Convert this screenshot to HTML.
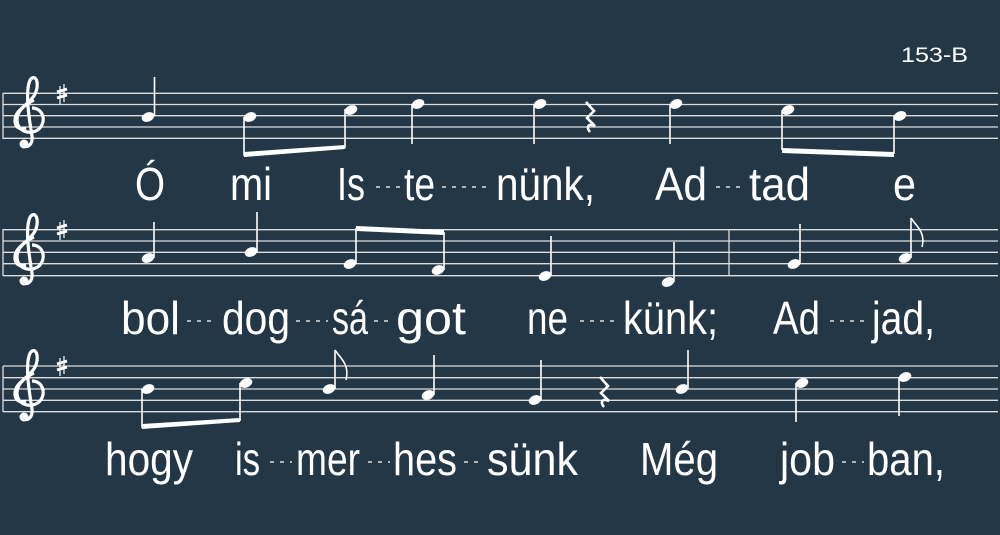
<!DOCTYPE html>
<html><head><meta charset="utf-8"><style>
html,body{margin:0;padding:0;background:#243746;}
svg{display:block}
text{font-family:"Liberation Sans Narrow","Liberation Sans",sans-serif;fill:#fff}
</style></head><body>
<svg width="1000" height="535" viewBox="0 0 1000 535" xmlns="http://www.w3.org/2000/svg">
<defs>
<g id="clef" fill="#fff">
<path d="M14 38 C2 42 0 28 7 21 C14 13 27 7 25 -8 C24 -14 19 -14 17 -7 C14 4 16 22 20 46 C21 54 16 58 12 56" fill="none" stroke="#fff" stroke-width="3.2"/>
<path d="M20 18 C31 18 35 31 27 39 C18 46 5 41 5 30 C5 20 14 14 22 10" fill="none" stroke="#fff" stroke-width="3.2"/>
<circle cx="12" cy="54" r="4.5"/>
</g>
<g id="sharp" stroke="#fff" fill="none"><path d="M-2 -8 V10 M2 -10 V8" stroke-width="1.2"/><path d="M-5 -2 L5 -5 M-5 4 L5 1" stroke-width="3"/></g>
<ellipse id="h" rx="6.5" ry="4.6" transform="rotate(-22)" fill="#fff"/>
<path id="rest" d="M-4 -13 L4 -4 L-3 3 L5 11 C-2 8 -4 12 0 17" fill="none" stroke="#fff" stroke-width="2.6"/>
</defs>
<text x="901" y="62" style="font-family:'Liberation Sans',sans-serif" font-size="21" textLength="67" lengthAdjust="spacingAndGlyphs">153-B</text>

<g stroke="#ddd" stroke-width="1.3">
<path d="M3 93.3H998M3 104.5H998M3 115.7H998M3 127H998M3 138.3H998M3 93V139"/>
<path d="M3 229.7H998M3 241H998M3 252.3H998M3 263.7H998M3 275.7H998M3 229V276M729 230V276"/>
<path d="M3 366H998M3 377.7H998M3 389H998M3 400.3H998M3 411.7H998M3 366V412"/>
</g>
<use href="#clef" x="12" y="90"/><use href="#sharp" x="62" y="94"/>
<use href="#clef" x="12" y="227"/><use href="#sharp" x="62" y="230"/>
<use href="#clef" x="12" y="363"/><use href="#sharp" x="62" y="366"/>

<g stroke="#fff" stroke-width="1.6">
<path d="M154.5 116V77"/><path d="M244 117V156M345 109V148M412 104V144M534 104V144M670 104V144M782 110V150M894 116V154"/>
</g>
<g fill="#fff">
<use href="#h" x="148" y="117"/><use href="#h" x="250" y="117"/><use href="#h" x="351" y="110"/><use href="#h" x="418" y="104"/>
<use href="#h" x="540" y="104"/><use href="#h" x="676" y="104"/><use href="#h" x="788" y="110"/><use href="#h" x="900" y="116"/>
<path d="M244 152L345 145V149L244 157Z"/><path d="M782 148L894 152V157L782 153Z"/>
</g>
<use href="#rest" x="590" y="115"/>

<g stroke="#fff" stroke-width="1.6">
<path d="M154 258V222M257 252V212M356 264V228M444 270V232M551 276V236M674 282V242M800 264V224M911 258V218"/>
<path d="M911 218C916 226 926 232 922 247" fill="none"/>
</g>
<g fill="#fff">
<use href="#h" x="148" y="258"/><use href="#h" x="251" y="252"/><use href="#h" x="350" y="264"/><use href="#h" x="438" y="270"/>
<use href="#h" x="545" y="276"/><use href="#h" x="668" y="282"/><use href="#h" x="794" y="264"/><use href="#h" x="905" y="258"/>
<path d="M356 226L444 230V235L356 231Z"/>
</g>

<g stroke="#fff" stroke-width="1.6">
<path d="M142 389V428M240 383V421M335 389V350M434 395V355M541 400V360M688 389V350M796 383V422M899 377V416"/>
<path d="M335 350C340 358 350 364 346 380" fill="none"/>
</g>
<g fill="#fff">
<use href="#h" x="148" y="389"/><use href="#h" x="246" y="383"/><use href="#h" x="329" y="389"/><use href="#h" x="428" y="395"/>
<use href="#h" x="535" y="400"/><use href="#h" x="682" y="389"/><use href="#h" x="802" y="383"/><use href="#h" x="905" y="377"/>
<path d="M142 424L240 418V422L142 429Z"/>
</g>
<use href="#rest" x="604" y="390"/>

<g font-size="46">
<text x="135" y="200" textLength="30" lengthAdjust="spacingAndGlyphs">Ó</text>
<text x="230" y="200" textLength="42" lengthAdjust="spacingAndGlyphs">mi</text>
<text x="337" y="200" textLength="28" lengthAdjust="spacingAndGlyphs">Is</text>
<text x="404" y="200" textLength="31" lengthAdjust="spacingAndGlyphs">te</text>
<text x="496" y="200" textLength="99" lengthAdjust="spacingAndGlyphs">nünk,</text>
<text x="655" y="200" textLength="52" lengthAdjust="spacingAndGlyphs">Ad</text>
<text x="749" y="200" textLength="61" lengthAdjust="spacingAndGlyphs">tad</text>
<text x="893" y="200" textLength="23" lengthAdjust="spacingAndGlyphs">e</text>
<text x="121" y="334" textLength="59" lengthAdjust="spacingAndGlyphs">bol</text>
<text x="222" y="334" textLength="68" lengthAdjust="spacingAndGlyphs">dog</text>
<text x="332" y="334" textLength="36" lengthAdjust="spacingAndGlyphs">sá</text>
<text x="396" y="334" textLength="70" lengthAdjust="spacingAndGlyphs">got</text>
<text x="527" y="334" textLength="41" lengthAdjust="spacingAndGlyphs">ne</text>
<text x="623" y="334" textLength="95" lengthAdjust="spacingAndGlyphs">künk;</text>
<text x="773" y="334" textLength="47" lengthAdjust="spacingAndGlyphs">Ad</text>
<text x="872" y="334" textLength="63" lengthAdjust="spacingAndGlyphs">jad,</text>
<text x="105" y="475" textLength="88" lengthAdjust="spacingAndGlyphs">hogy</text>
<text x="235" y="475" textLength="25" lengthAdjust="spacingAndGlyphs">is</text>
<text x="296" y="475" textLength="64" lengthAdjust="spacingAndGlyphs">mer</text>
<text x="393" y="475" textLength="64" lengthAdjust="spacingAndGlyphs">hes</text>
<text x="487" y="475" textLength="91" lengthAdjust="spacingAndGlyphs">sünk</text>
<text x="640" y="475" textLength="78" lengthAdjust="spacingAndGlyphs">Még</text>
<text x="780" y="475" textLength="55" lengthAdjust="spacingAndGlyphs">job</text>
<text x="867" y="475" textLength="78" lengthAdjust="spacingAndGlyphs">ban,</text>
</g>
<g stroke="#fff" stroke-width="1.3" stroke-dasharray="4 6">
<path d="M376 187H400M442 187H491M716 187H745"/>
<path d="M187 321H216M296 321H328M374 321H392M580 321H618M830 321H868"/>
<path d="M270 462H292M368 462H390M464 462H484M842 462H864"/>
</g>
</svg>
</body></html>
